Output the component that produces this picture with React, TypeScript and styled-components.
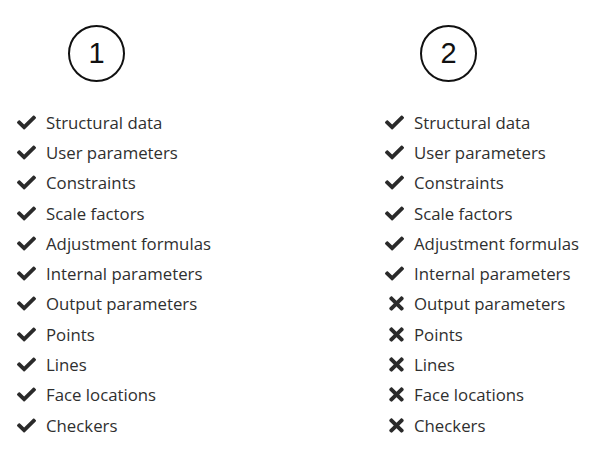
import styled, { createGlobalStyle } from "styled-components";
import { FaCheck, FaTimes } from "react-icons/fa";

const GlobalStyle = createGlobalStyle`
  body {
    margin: 0;
    background: #ffffff;
    font-family: "Open Sans", "Liberation Sans", sans-serif;
  }
`;

const items = [
  "Structural data",
  "User parameters",
  "Constraints",
  "Scale factors",
  "Adjustment formulas",
  "Internal parameters",
  "Output parameters",
  "Points",
  "Lines",
  "Face locations",
  "Checkers",
];

const columns = [
  { label: "1", offset: 51, width: 368, passed: 11 },
  { label: "2", offset: 35, width: 200, passed: 6 },
];

export default function App() {
  return (
    <>
      <GlobalStyle />
      <Page>
        {columns.map((col) => (
          <Column key={col.label} $width={col.width}>
            <Badge $offset={col.offset}>{col.label}</Badge>
            <List>
              {items.map((name, i) => {
                const ok = i < col.passed;
                return (
                  <Row key={name}>
                    <Icon $ok={ok}>{ok ? <FaCheck size={19} /> : <FaTimes size={21} />}</Icon>
                    <span>{name}</span>
                  </Row>
                );
              })}
            </List>
          </Column>
        ))}
      </Page>
    </>
  );
}

const Page = styled.div`
  display: flex;
  padding: 25px 0 0 17px;
`;

const Column = styled.div<{ $width: number }>`
  display: flex;
  flex-direction: column;
  width: ${(p) => p.$width}px;
`;

const Badge = styled.div<{ $offset: number }>`
  box-sizing: border-box;
  width: 57px;
  height: 57px;
  margin-left: ${(p) => p.$offset}px;
  border: 2px solid #111111;
  border-radius: 50%;
  display: flex;
  align-items: center;
  justify-content: center;
  font-family: "Liberation Sans", Arial, sans-serif;
  font-size: 29px;
  color: #111111;
`;

const List = styled.ul`
  list-style: none;
  margin: 25px 0 0;
  padding: 0;
`;

const Row = styled.li`
  display: flex;
  align-items: center;
  height: 30.3px;
  font-size: 16.8px;
  color: #2f2f2f;
`;

const Icon = styled.span<{ $ok: boolean }>`
  display: flex;
  align-items: center;
  width: 29px;
  padding-left: ${(p) => (p.$ok ? 0 : 1)}px;
  box-sizing: border-box;
  color: #2a2a2a;
`;
